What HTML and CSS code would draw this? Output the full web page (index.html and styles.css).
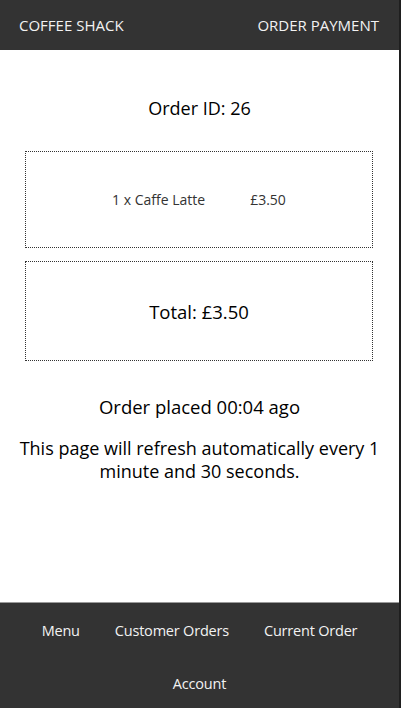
FILE: index.html
```html
<!DOCTYPE html>
<html>
<head>
	<title>Coffee Shack - Order Payment</title>
	<link rel="stylesheet" href="styles.css">
</head>
<body>
	<div class="page">
		<div class="topbar">
			<span class="brand">COFFEE SHACK</span>
			<span class="pagename">ORDER PAYMENT</span>
		</div>

		<div class="content">
			<h2 class="orderid">Order ID: 26</h2>

			<div class="box items">
				<div class="item">
					<span>1 x Caffe Latte</span>
					<span>&pound;3.50</span>
				</div>
			</div>

			<div class="box total">
				<span>Total: &pound;3.50</span>
			</div>

			<p class="placed">Order placed 00:04 ago</p>
			<p class="refresh">This page will refresh automatically every 1 minute and 30 seconds.</p>
		</div>

		<div class="navbar">
			<a href="#">Menu</a>
			<a href="#">Customer Orders</a>
			<a href="#">Current Order</a>
			<a href="#">Account</a>
		</div>
	</div>
</body>
</html>
```

FILE: styles.css
```css
html {
	background: #1f1f1f;
}

body {
	margin: 0;
	width: 399px;
	font-family: "Open Sans", "Noto Sans", sans-serif;
	color: #000;
}

.page {
	display: flex;
	flex-direction: column;
	height: 708px;
	background: #fff;
}

.topbar {
	display: flex;
	justify-content: space-between;
	align-items: center;
	height: 50px;
	padding: 0 20px 0 19px;
	background: #333;
	color: #f2f2f2;
	font-size: 15px;
}

.content {
	flex: 1;
	text-align: center;
	border-bottom: 1px solid #9a9a9a;
}

.orderid {
	margin: 46px 0 31px;
	font-size: 18px;
	font-weight: normal;
}

.box {
	display: flex;
	align-items: center;
	justify-content: center;
	margin: 0 26px 0 25px;
	border: 1px dotted #333;
}

.items {
	height: 95px;
}

.item {
	display: flex;
	gap: 45px;
	font-size: 14px;
	color: #333;
}

.total {
	height: 98px;
	margin-top: 13px;
	font-size: 18.5px;
}

.placed {
	margin: 33px 0 0;
	font-size: 18.5px;
}

.refresh {
	margin: 18px 10px 0;
	font-size: 18px;
	line-height: 23px;
}

.navbar {
	display: flex;
	flex-wrap: wrap;
	justify-content: center;
	column-gap: 35px;
	height: 105px;
	padding-top: 1px;
	box-sizing: border-box;
	background: #333;
}

.navbar a {
	line-height: 53px;
	color: #f2f2f2;
	text-decoration: none;
	font-size: 14.5px;
	letter-spacing: -0.2px;
}
```
